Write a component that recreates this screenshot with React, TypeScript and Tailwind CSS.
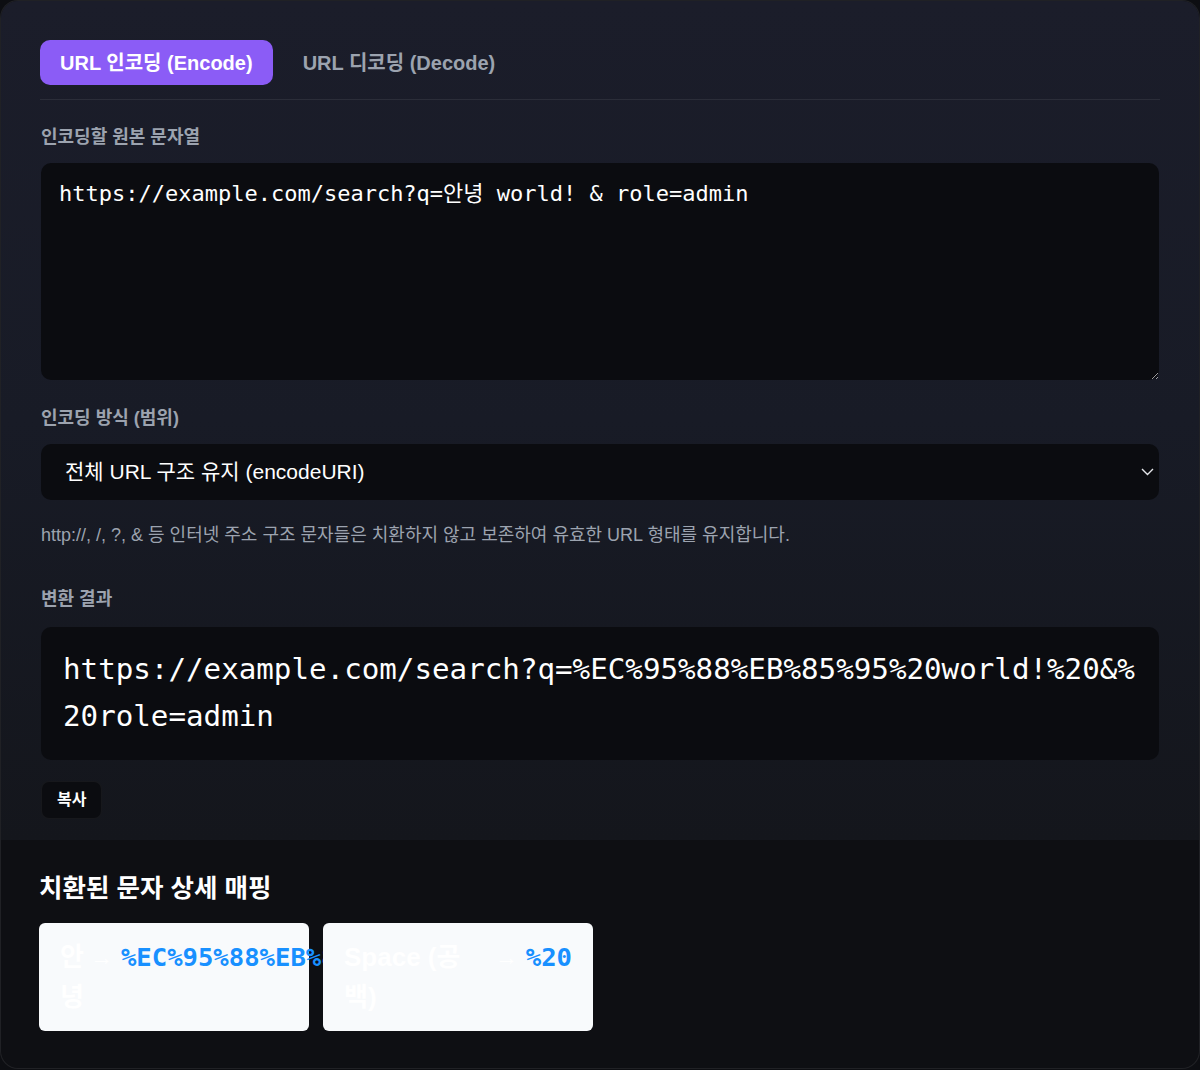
import React, { useState } from 'react';

const SANS = { fontFamily: '"Liberation Sans", "Noto Sans CJK KR", sans-serif' };
const MONO = { fontFamily: '"DejaVu Sans Mono", "Noto Sans CJK KR", monospace' };

const SOURCE = 'https://example.com/search?q=안녕 world! & role=admin';

type Mapping = { from: string; to: string };

const MAPPINGS: Mapping[] = [
  { from: '안녕', to: '%EC%95%88%EB%85%95' },
  { from: 'Space (공백)', to: '%20' },
];

function Label({ children }: { children: React.ReactNode }) {
  return <p className="text-[18px] leading-[26px] font-semibold text-[#9ca3af]">{children}</p>;
}

function MappingCard({ item }: { item: Mapping }) {
  return (
    <div className="relative w-[270px] h-[108px] shrink-0 rounded-[6px] bg-[#f8fafc] px-[21px] pt-[14px] flex items-start">
      <span className="flex-1 text-[26px] leading-[40px] font-bold text-white">{item.from}</span>
      <span className="shrink-0 ml-[6px] mr-[8px] text-[23px] leading-[40px] font-bold text-white">→</span>
      <span style={MONO} className="shrink-0 whitespace-nowrap text-[25.6px] leading-[40px] font-bold text-[#1890ff]">
        {item.to}
      </span>
    </div>
  );
}

export default function App() {
  const [mode, setMode] = useState<'encode' | 'decode'>('encode');
  const [scope, setScope] = useState('uri');
  const result = encodeURI(SOURCE);

  return (
    <div style={SANS} className="min-h-screen bg-[#0d0e12]">
      <div className="rounded-[18px] border border-white/[0.08] bg-[#0e0f13] overflow-hidden">
        <section className="px-[39px] pt-[39px] pb-[21px] bg-gradient-to-b from-[#1b1d2a] via-[#181b26] to-[#14161c]">
          <div className="flex items-center gap-[10px] pb-[14px] border-b border-white/[0.08]">
            <button
              onClick={() => setMode('encode')}
              className={`h-[45px] px-5 rounded-[10px] text-[20px] font-bold ${mode === 'encode' ? 'bg-[#8b5cf6] text-white' : 'text-[#9ca3af]'}`}
            >
              URL 인코딩 (Encode)
            </button>
            <button
              onClick={() => setMode('decode')}
              className={`h-[45px] px-5 rounded-[10px] text-[20px] font-bold ${mode === 'decode' ? 'bg-[#8b5cf6] text-white' : 'text-[#9ca3af]'}`}
            >
              URL 디코딩 (Decode)
            </button>
          </div>

          <div className="px-px">
            <div className="mt-[24px]">
              <Label>인코딩할 원본 문자열</Label>
            </div>
            <textarea
              readOnly
              value={SOURCE}
              style={MONO}
              className="mt-[13px] block w-full h-[217px] resize-y rounded-[10px] bg-[#0b0c10] px-[18px] py-[18px] text-[22px] leading-[26px] text-white outline-none"
            />

            <div className="mt-[25px]">
              <Label>인코딩 방식 (범위)</Label>
            </div>
            <div className="relative mt-[13px]">
              <select
                value={scope}
                onChange={(e) => setScope(e.target.value)}
                style={SANS}
                className="block w-full h-[56px] appearance-none rounded-[10px] bg-[#0b0c10] pl-[24px] pr-10 text-[21px] text-white outline-none"
              >
                <option value="uri">전체 URL 구조 유지 (encodeURI)</option>
                <option value="component">모든 특수문자 치환 (encodeURIComponent)</option>
              </select>
              <svg
                className="pointer-events-none absolute right-[5px] top-1/2 -translate-y-1/2"
                width="13"
                height="8"
                viewBox="0 0 13 8"
                fill="none"
              >
                <path d="M1 1l5.5 5.5L12 1" stroke="#e5e7eb" strokeWidth="1.4" />
              </svg>
            </div>
            <p className="mt-[23px] text-[18px] leading-[24px] text-[#9ca3af]">
              http://, /, ?, &amp; 등 인터넷 주소 구조 문자들은 치환하지 않고 보존하여 유효한 URL 형태를 유지합니다.
            </p>

            <div className="mt-[39px]">
              <Label>변환 결과</Label>
            </div>
            <div
              style={MONO}
              className="mt-[15px] rounded-[10px] bg-[#0b0c10] px-[22px] pt-[19px] pb-[20px] text-[29.2px] leading-[47px] text-white break-all"
            >
              {result}
            </div>
            <button className="mt-[21px] h-[38px] px-[15px] rounded-[8px] border border-white/[0.05] bg-[#0b0c10] text-[16px] font-bold text-white">
              복사
            </button>
          </div>
        </section>

        <section className="px-[38px] pt-[31px] pb-[37px]">
          <h3 className="text-[25.5px] leading-[34px] font-bold text-white">치환된 문자 상세 매핑</h3>
          <div className="mt-[18px] flex gap-[14px]">
            {MAPPINGS.map((m) => (
              <MappingCard key={m.to} item={m} />
            ))}
          </div>
        </section>
      </div>
    </div>
  );
}
